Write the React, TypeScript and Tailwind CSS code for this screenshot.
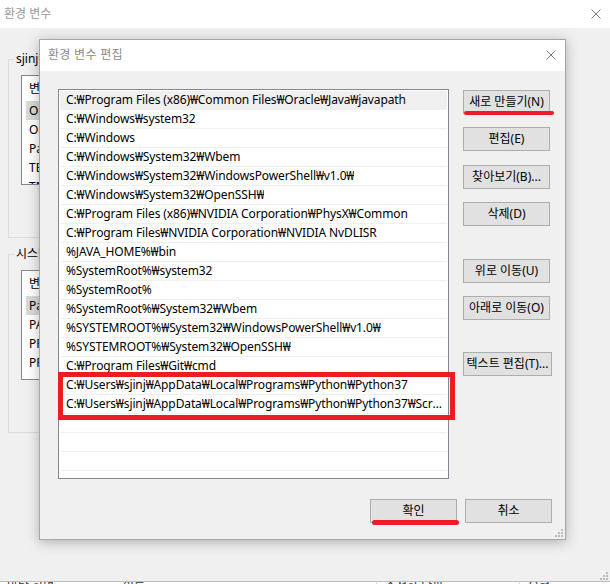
import React from 'react';

const paths = [
  'C:₩Program Files (x86)₩Common Files₩Oracle₩Java₩javapath',
  'C:₩Windows₩system32',
  'C:₩Windows',
  'C:₩Windows₩System32₩Wbem',
  'C:₩Windows₩System32₩WindowsPowerShell₩v1.0₩',
  'C:₩Windows₩System32₩OpenSSH₩',
  'C:₩Program Files (x86)₩NVIDIA Corporation₩PhysX₩Common',
  'C:₩Program Files₩NVIDIA Corporation₩NVIDIA NvDLISR',
  '%JAVA_HOME%₩bin',
  '%SystemRoot%₩system32',
  '%SystemRoot%',
  '%SystemRoot%₩System32₩Wbem',
  '%SYSTEMROOT%₩System32₩WindowsPowerShell₩v1.0₩',
  '%SYSTEMROOT%₩System32₩OpenSSH₩',
  'C:₩Program Files₩Git₩cmd',
  'C:₩Users₩sjinj₩AppData₩Local₩Programs₩Python₩Python37',
  'C:₩Users₩sjinj₩AppData₩Local₩Programs₩Python₩Python37₩Scripts₩',
  '',
  '',
  '',
];

const userVars = ['OneDrive', 'OneDriveConsumer', 'Path', 'TEMP', 'TMP'];
const sysVars = ['Path', 'PATHEXT', 'PROCESSOR_ARCHITECTURE', 'PROCESSOR_IDENTIFIER'];

function CloseIcon() {
  return (
    <svg width="10" height="10" viewBox="0 0 10 10" className="shrink-0">
      <path d="M0.5 0.5 L9.5 9.5 M9.5 0.5 L0.5 9.5" stroke="#7a7a7a" strokeWidth="1" />
    </svg>
  );
}

function Grip() {
  return (
    <svg width="8" height="8" viewBox="0 0 8 8">
      <g fill="#bdbdbd">
        <rect x="6" y="0" width="2" height="2" />
        <rect x="3" y="3" width="2" height="2" />
        <rect x="6" y="3" width="2" height="2" />
        <rect x="0" y="6" width="2" height="2" />
        <rect x="3" y="6" width="2" height="2" />
        <rect x="6" y="6" width="2" height="2" />
      </g>
    </svg>
  );
}

function WinButton({ label, wide, className = '' }: { label: string; wide?: boolean; className?: string }) {
  return (
    <button
      className={`${wide ? 'w-[89px]' : 'w-[87px]'} h-[24px] shrink-0 bg-[#e1e1e1] border border-[#adadad] text-[12px] leading-none text-black whitespace-nowrap ${className}`}
    >
      {label}
    </button>
  );
}

function VarGroup({ legend, vars, className = '' }: { legend: string; vars: string[]; className?: string }) {
  return (
    <fieldset className={`ml-[8px] w-[545px] h-[187px] border border-[#dcdcdc] pl-[12px] ${className}`}>
      <legend className="ml-[-7px] px-[2px] text-[12px] leading-[16px] text-black">{legend}</legend>
      <div className="mt-[8px] w-[520px] h-[110px] border border-[#828790] bg-white overflow-hidden text-[12px] text-black">
        <div className="h-[25px] flex items-center pl-[7px]">변수</div>
        {vars.map((v, i) => (
          <div key={v} className={`h-[19px] ml-[4px] pl-[3px] flex items-center ${i === 0 ? 'bg-[#d9d9d9]' : ''}`}>
            {v}
          </div>
        ))}
      </div>
    </fieldset>
  );
}

export default function App() {
  return (
    <div className="relative w-[610px] h-[584px] overflow-hidden bg-[#f0f0f0] font-[family-name:'Noto_Sans','Noto_Sans_CJK_KR',sans-serif]">
      {/* background window */}
      <div className="h-[28px] bg-white flex items-center justify-between pl-[4px] pr-[9px]">
        <span className="text-[12px] text-[#999999]">환경 변수</span>
        <CloseIcon />
      </div>
      <div className="relative h-[553px] pt-[23px]">
        <VarGroup legend="sjinj에 대한 사용자 변수(U)" vars={userVars} />
        <VarGroup legend="시스템 변수(S)" vars={sysVars} className="mt-[8px]" />
        <div className="absolute right-[2px] bottom-[1px]">
          <Grip />
        </div>
      </div>
      <div className="h-[3px] border-t border-[#bcbcbc] bg-white overflow-hidden">
        <div className="flex text-[12px] leading-[12px] mt-[-1px] text-[#333]">
          <span className="ml-[7px] w-[116px]">바탕 화면</span>
          <span className="w-[253px]">이름</span>
          <span className="border-l border-[#dcdcdc] pl-[8px] w-[143px]">수정한 날짜</span>
          <span className="border-l border-[#dcdcdc] pl-[8px]">유형</span>
        </div>
      </div>

      {/* edit dialog */}
      <div className="absolute left-[39px] top-[39px] w-[527px] h-[501px] border border-[#a6a6a6] bg-[#f0f0f0] shadow-[0_2px_12px_rgba(0,0,0,0.28)] flex flex-col">
        <div className="h-[31px] bg-white flex items-center justify-between pl-[8px] pr-[9px] pb-[2px]">
          <span className="text-[12px] text-[#8a8a8a] tracking-[0.3px]">환경 변수 편집</span>
          <CloseIcon />
        </div>
        <div className="relative flex-1 pt-[18px] pl-[18px] pr-[13px]">
          <div className="flex">
            <div className="w-[393px] h-[390px] border border-[#828790] bg-white pt-[1px] overflow-hidden text-[12px] text-black tracking-[-0.12px]">
              {paths.map((p, i) => (
                <div
                  key={i}
                  className={`h-[19px] mx-[1px] pl-[6px] pr-[4px] border-b border-[#f0f0f0] flex items-center whitespace-nowrap overflow-hidden ${i === 0 ? 'bg-[#f0f0f0]' : ''}`}
                >
                  <span className="truncate">{p}</span>
                </div>
              ))}
            </div>
            <div className="ml-[14px] mt-[1px] flex flex-col">
              <WinButton label="새로 만들기(N)" />
              <WinButton label="편집(E)" className="mt-[13px]" />
              <WinButton label="찾아보기(B)..." className="mt-[14px]" />
              <WinButton label="삭제(D)" className="mt-[13px]" />
              <WinButton label="위로 이동(U)" className="mt-[33px]" />
              <WinButton label="아래로 이동(O)" className="mt-[13px]" />
              <WinButton label="텍스트 편집(T)..." wide className="mt-[32px]" />
            </div>
          </div>
          <div className="mt-[20px] flex justify-end gap-[8px]">
            <WinButton label="확인" />
            <WinButton label="취소" />
          </div>
          <div className="absolute right-[2px] bottom-[2px]">
            <Grip />
          </div>
        </div>
      </div>

      {/* red annotations */}
      <div className="absolute left-[58px] top-[372px] w-[397px] h-[48px] border-[5px] border-[#ed1c24]" />
      <div className="absolute left-[464px] top-[111px] w-[90px] h-[4px] rounded-full bg-[#ed1c24]" />
      <div className="absolute left-[372px] top-[520px] w-[87px] h-[5px] rounded-full bg-[#ed1c24]" />
    </div>
  );
}
